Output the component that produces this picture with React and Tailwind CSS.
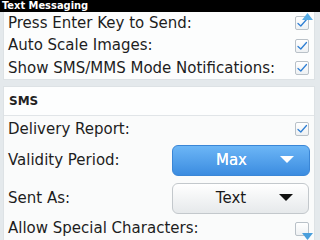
import React from "react";

const Check = ({ checked = true }) => (
  <div className="w-[14px] h-[14px] rounded-[2px] border border-[#b9c1c8] bg-gradient-to-b from-white to-[#eef1f3] flex items-center justify-center">
    {checked && (
      <svg width="12" height="12" viewBox="0 0 12 12">
        <path d="M2 6.5 L4.8 9 L10.5 2.5" fill="none" stroke="#2f7fd4" strokeWidth="1.3" strokeLinecap="round" strokeLinejoin="round" />
      </svg>
    )}
  </div>
);

const Row = ({ label, h, children }) => (
  <div className={`flex items-center justify-between pl-[4px] pr-[5px] ${h}`}>
    <span className="text-[15px] text-[#1e1e1e] leading-none">{label}</span>
    {children}
  </div>
);

export default function App() {
  return (
    <div
      className="relative w-[320px] h-[240px] overflow-hidden bg-[#e4e9ec]"
      style={{ fontFamily: '"DejaVu Sans", sans-serif' }}
    >
      <div
        className="h-[12px] bg-black text-white font-bold text-[11px] leading-[12px] pl-[2px]"
        style={{ fontFamily: '"DejaVu Sans Condensed", "DejaVu Sans", sans-serif' }}
      >
        Text Messaging
      </div>
      <div className="ml-[3px] w-[312px] h-[68px] bg-[#fcfdfd] border border-t-0 border-[#dde2e5] flex flex-col">
        <Row label="Press Enter Key to Send:" h="h-[22px]"><Check /></Row>
        <Row label="Auto Scale Images:" h="h-[23px]"><Check /></Row>
        <Row label="Show SMS/MMS Mode Notifications:" h="h-[22px]"><Check /></Row>
      </div>
      <div className="mt-[6px] ml-[3px] w-[312px] h-[170px] bg-[#fafbfb] border border-[#dde2e5] flex flex-col">
        <div className="h-[29px] flex items-center pl-[5px] bg-[#fdfefe] border-b border-[#e1e5e8]">
          <span className="text-[12px] font-bold text-[#222] leading-none">SMS</span>
        </div>
        <Row label="Delivery Report:" h="h-[26px]"><Check /></Row>
        <Row label="Validity Period:" h="h-[36px]">
          <div className="w-[138px] h-[31px] -mr-[1px] rounded-[6px] border border-[#3a86d6] bg-gradient-to-b from-[#6cb6f6] to-[#3b8ce0] flex items-center text-white">
            <span className="flex-1 text-center pl-[10px] text-[15px] leading-none [text-shadow:0_0_0.6px_#fff]">Max</span>
            <svg width="14" height="8" viewBox="0 0 14 8" className="mr-[15px]">
              <path d="M0 0 H14 L7 7 Z" fill="#ffffff" />
            </svg>
          </div>
        </Row>
        <Row label="Sent As:" h="h-[40px]">
          <div className="w-[137px] h-[31px] rounded-[6px] border border-[#c3c8cc] bg-gradient-to-b from-[#ffffff] to-[#e6e9eb] flex items-center text-[#1a1a1a]">
            <span className="flex-1 text-center pl-[10px] text-[15px] leading-none">Text</span>
            <svg width="14" height="8" viewBox="0 0 14 8" className="mr-[15px]">
              <path d="M0 0 H14 L7 7 Z" fill="#111111" />
            </svg>
          </div>
        </Row>
        <Row label="Allow Special Characters:" h="h-[21px]"><Check checked={false} /></Row>
      </div>
      <svg className="absolute left-[302px] top-[13px]" width="11" height="7" viewBox="0 0 11 7">
        <path d="M0 7 L5.5 0 L11 7 Z" fill="#5aaee6" />
      </svg>
      <svg className="absolute left-[302px] top-[233px]" width="11" height="7" viewBox="0 0 11 7">
        <path d="M0 0 L11 0 L5.5 7 Z" fill="#4a9fdc" />
      </svg>
    </div>
  );
}
